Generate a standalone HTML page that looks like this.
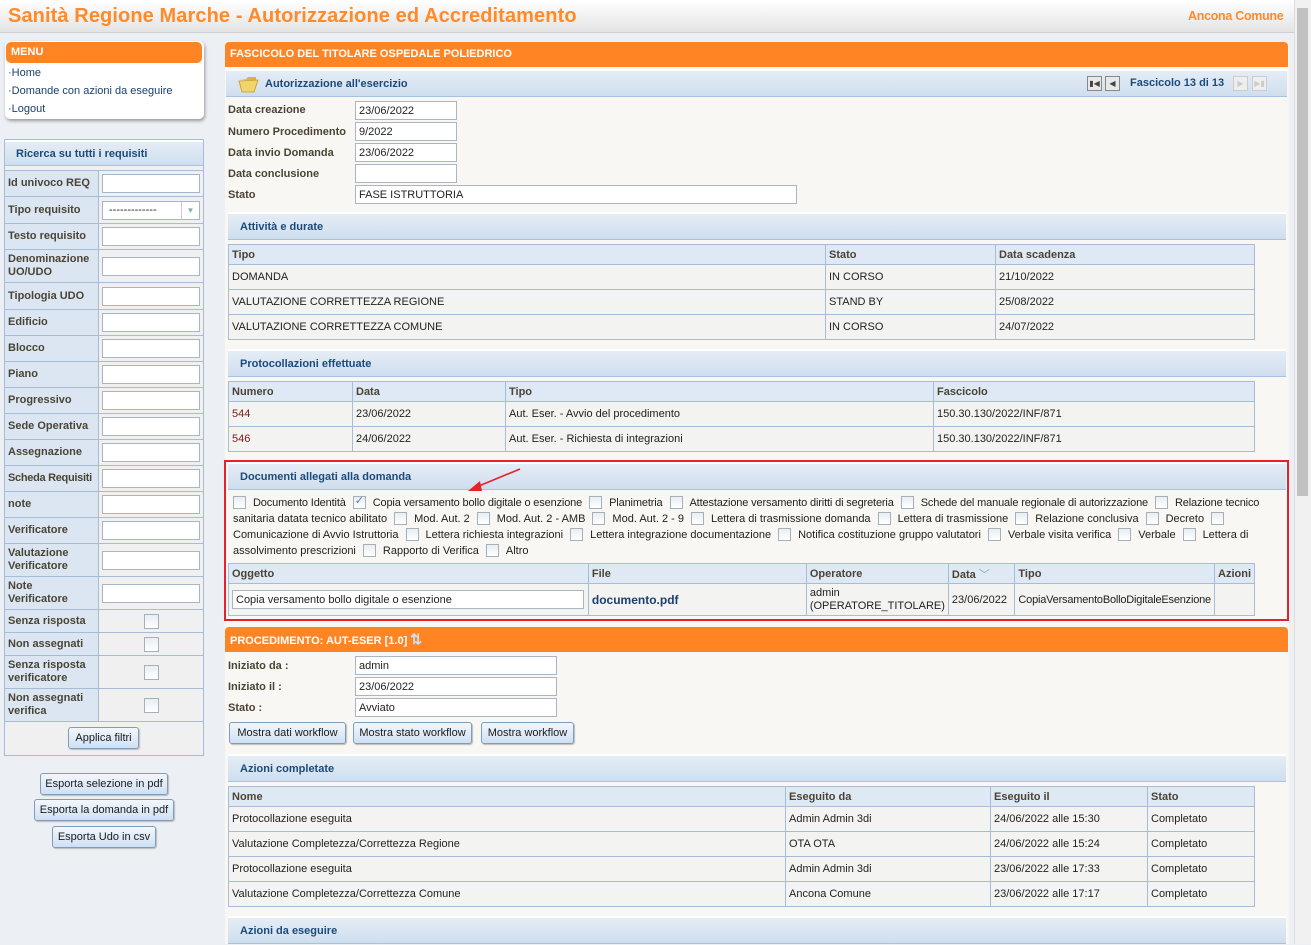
<!DOCTYPE html>
<html><head><meta charset="utf-8"><style>
*{box-sizing:border-box;margin:0;padding:0}
body{width:1311px;height:944px;overflow:hidden;background:#eceff4;font-family:"Liberation Sans",Arial,sans-serif;font-size:11px;color:#222;position:relative}
.a{position:absolute}
.hdr{left:0;top:0;width:1294px;height:33px;background:linear-gradient(#fff,#e4e4e4);border-bottom:1px solid #d0d0d0}
.title{left:8px;top:5px;font-size:20px;font-weight:bold;color:#ff8a2a;white-space:nowrap;letter-spacing:0.1px}
.sb{left:1294px;top:0;width:17px;height:944px;background:#f1f1f1;border-left:1px solid #ddd}
.thumb{left:1297px;top:8px;width:11px;height:488px;background:#c1c1c1}
.orange{background:#ff8424;color:#fff;font-weight:bold;border-radius:4px 4px 0 0;padding-left:5px;line-height:24px}
.sec{background:linear-gradient(#e5edf6,#cfdeee);border-top:2px solid #fff;border-bottom:1px solid #a9c3de;color:#1b4b7b;font-weight:bold;padding-left:12px}
.lbl{font-weight:bold;color:#4a4434;white-space:nowrap}
.inp{background:#fff;border:1px solid #a9b6c2;padding-left:3px;line-height:18px;white-space:nowrap;overflow:hidden}
table{border-collapse:collapse;position:absolute}
td,th{border:1px solid #a7bdd6;padding:0 3px;text-align:left;white-space:nowrap}
th{background:#dfe8f5;color:#4a4434;font-weight:bold;height:20px}
td{background:#f3f3f1;height:25px}
.btn{position:absolute;background:linear-gradient(#f2f7fd,#cfe0f3);border:1px solid #7f9db9;border-radius:3px;text-align:center;line-height:20px;color:#1a1a1a;box-shadow:1px 1px 1px #bbb}
.ft td{background:#f0f0f0;height:auto}
.ft td.l{background:#dce6f3;font-weight:bold;color:#4a4434;width:96px;padding:0 3px;white-space:normal;line-height:13px}
.fi{display:block;width:98px;height:19px;background:#fff;border:1px solid #a9b6c2;margin:0 auto}
.cb{display:inline-block;width:13px;height:13px;border:1px solid #a5b0bb;background:linear-gradient(#e9edf1,#fff);vertical-align:-3px;margin:0 7px}
.cl{position:absolute;left:233px;white-space:nowrap;color:#222}
.cbx{width:13px;height:13px;border:1px solid #a5b0bb;background:linear-gradient(#e9edf1,#fff)}
</style></head><body>
<div class="a hdr"></div>
<div class="a title">Sanità Regione Marche - Autorizzazione ed Accreditamento</div>
<div class="a" style="left:1188px;top:9px;color:#ff8a2a;font-size:12.5px;font-weight:bold;letter-spacing:-0.3px">Ancona Comune</div>
<div class="a sb"></div><div class="a thumb"></div>

<!-- menu -->
<div class="a" style="left:5px;top:41px;width:199px;height:78px;background:#fff;border-radius:5px;box-shadow:1px 2px 3px #999"></div>
<div class="a orange" style="left:6px;top:42px;width:196px;height:21px;line-height:20px;border-radius:5px;font-size:11px">MENU</div>
<div class="a" style="left:8px;top:64px;line-height:18px;color:#1b3f6e">·Home<br>·Domande con azioni da eseguire<br>·Logout</div>

<!-- filter -->
<div class="a" style="left:4px;top:139px;width:200px;height:616px;border:1px solid #a7bdd6;background:#f0f0f0"></div>
<div class="a sec" style="left:5px;top:140px;width:198px;height:26px;line-height:25px;padding-left:11px">Ricerca su tutti i requisiti</div>
<table class="ft" style="left:4px;top:170px;width:200px">
<tr style="height:26px"><td class="l">Id univoco REQ</td><td><span class="fi"></span></td></tr>
<tr style="height:27px"><td class="l">Tipo requisito</td><td><span class="fi" style="font-weight:normal;line-height:17px;padding-left:6px;position:relative">-------------<span style="position:absolute;right:0;top:0;width:18px;height:17px;border-left:1px solid #ccc;color:#8aa;font-size:8px;text-align:center">▼</span></span></td></tr>
<tr style="height:26px"><td class="l">Testo requisito</td><td><span class="fi"></span></td></tr>
<tr style="height:33px"><td class="l">Denominazione UO/UDO</td><td><span class="fi"></span></td></tr>
<tr style="height:27px"><td class="l">Tipologia UDO</td><td><span class="fi"></span></td></tr>
<tr style="height:26px"><td class="l">Edificio</td><td><span class="fi"></span></td></tr>
<tr style="height:26px"><td class="l">Blocco</td><td><span class="fi"></span></td></tr>
<tr style="height:26px"><td class="l">Piano</td><td><span class="fi"></span></td></tr>
<tr style="height:26px"><td class="l">Progressivo</td><td><span class="fi"></span></td></tr>
<tr style="height:26px"><td class="l">Sede Operativa</td><td><span class="fi"></span></td></tr>
<tr style="height:26px"><td class="l">Assegnazione</td><td><span class="fi"></span></td></tr>
<tr style="height:26px"><td class="l" style="white-space:nowrap;letter-spacing:-0.3px">Scheda Requisiti</td><td><span class="fi"></span></td></tr>
<tr style="height:26px"><td class="l">note</td><td><span class="fi"></span></td></tr>
<tr style="height:26px"><td class="l">Verificatore</td><td><span class="fi"></span></td></tr>
<tr style="height:33px"><td class="l">Valutazione Verificatore</td><td><span class="fi"></span></td></tr>
<tr style="height:33px"><td class="l">Note Verificatore</td><td><span class="fi"></span></td></tr>
<tr style="height:23px"><td class="l">Senza risposta</td><td><div class="cbx" style="margin:0 auto;width:15px;height:15px"></div></td></tr>
<tr style="height:23px"><td class="l">Non assegnati</td><td><div class="cbx" style="margin:0 auto;width:15px;height:15px"></div></td></tr>
<tr style="height:33px"><td class="l">Senza risposta verificatore</td><td><div class="cbx" style="margin:0 auto;width:15px;height:15px"></div></td></tr>
<tr style="height:33px"><td class="l">Non assegnati verifica</td><td><div class="cbx" style="margin:0 auto;width:15px;height:15px"></div></td></tr>
<tr style="height:34px"><td colspan="2"></td></tr>
</table>
<div class="btn" style="left:68px;top:727px;width:71px">Applica filtri</div>
<div class="btn" style="left:40px;top:773px;width:128px">Esporta selezione in pdf</div>
<div class="btn" style="left:34px;top:799px;width:140px">Esporta la domanda in pdf</div>
<div class="btn" style="left:52px;top:826px;width:104px">Esporta Udo in csv</div>

<!-- main -->
<div class="a" style="left:225px;top:42px;width:1064px;height:902px;background:#f8f7f3"></div>
<div class="a orange" style="left:225px;top:42px;width:1063px;height:25px;line-height:25px;font-size:11px">FASCICOLO DEL TITOLARE OSPEDALE POLIEDRICO</div>
<div class="a sec" style="left:226px;top:69px;width:1061px;height:28px;line-height:27px;padding-left:39px">Autorizzazione all'esercizio</div>
<svg class="a" style="left:238px;top:75px" width="22" height="18" viewBox="0 0 22 18"><path d="M2 4 L8 4 L10 2 L18 2 L18 6 Z" fill="#d9b44a"/><path d="M1 6 L20 5 L16 17 L4 17 Z" fill="#f3d36b" stroke="#c49a2c" stroke-width=".8"/></svg>
<div class="a" style="left:1087px;top:76px;width:15px;height:15px;border:1px solid #888;background:#e8e8e8;font-size:8px;text-align:center;line-height:13px;color:#444">▮◀</div>
<div class="a" style="left:1105px;top:76px;width:15px;height:15px;border:1px solid #888;background:#e8e8e8;font-size:8px;text-align:center;line-height:13px;color:#444">◀</div>
<div class="a" style="left:1130px;top:77px;font-weight:bold;color:#1b4b7b">Fascicolo 13 di 13</div>
<div class="a" style="left:1233px;top:76px;width:15px;height:15px;border:1px solid #ccc;background:#eee;font-size:8px;text-align:center;line-height:13px;color:#ccc">▶</div>
<div class="a" style="left:1252px;top:76px;width:15px;height:15px;border:1px solid #ccc;background:#eee;font-size:8px;text-align:center;line-height:13px;color:#ccc">▶▮</div>

<div class="a lbl" style="left:228px;top:104px">Data creazione</div><div class="a inp" style="left:355px;top:101px;width:102px;height:19px">23/06/2022</div>
<div class="a lbl" style="left:228px;top:126px">Numero Procedimento</div><div class="a inp" style="left:355px;top:122px;width:102px;height:19px">9/2022</div>
<div class="a lbl" style="left:228px;top:147px">Data invio Domanda</div><div class="a inp" style="left:355px;top:143px;width:102px;height:19px">23/06/2022</div>
<div class="a lbl" style="left:228px;top:168px">Data conclusione</div><div class="a inp" style="left:355px;top:164px;width:102px;height:19px"></div>
<div class="a lbl" style="left:228px;top:189px">Stato</div><div class="a inp" style="left:355px;top:185px;width:442px;height:19px">FASE ISTRUTTORIA</div>

<div class="a sec" style="left:228px;top:212px;width:1058px;height:28px;line-height:27px">Attività e durate</div>
<table style="left:228px;top:244px;width:1027px">
<tr><th style="width:597px">Tipo</th><th style="width:170px">Stato</th><th>Data scadenza</th></tr>
<tr><td>DOMANDA</td><td>IN CORSO</td><td>21/10/2022</td></tr>
<tr><td>VALUTAZIONE CORRETTEZZA REGIONE</td><td>STAND BY</td><td>25/08/2022</td></tr>
<tr><td>VALUTAZIONE CORRETTEZZA COMUNE</td><td>IN CORSO</td><td>24/07/2022</td></tr>
</table>

<div class="a sec" style="left:228px;top:349px;width:1058px;height:28px;line-height:27px">Protocollazioni effettuate</div>
<table style="left:228px;top:381px;width:1027px">
<tr><th style="width:124px">Numero</th><th style="width:153px">Data</th><th style="width:428px">Tipo</th><th>Fascicolo</th></tr>
<tr><td style="color:#7a1a1a">544</td><td>23/06/2022</td><td>Aut. Eser. - Avvio del procedimento</td><td>150.30.130/2022/INF/871</td></tr>
<tr><td style="color:#7a1a1a">546</td><td>24/06/2022</td><td>Aut. Eser. - Richiesta di integrazioni</td><td>150.30.130/2022/INF/871</td></tr>
</table>

<!-- documenti -->
<div class="a" style="left:224px;top:460px;width:1065px;height:161px;border:2px solid #e8202a"></div>
<div class="a sec" style="left:228px;top:462px;width:1058px;height:28px;line-height:27px">Documenti allegati alla domanda</div>
<svg class="a" style="left:460px;top:464px" width="66" height="32"><line x1="60" y1="5" x2="14" y2="24" stroke="#e8202a" stroke-width="1.6"/><path d="M8 27 L20 17 L22 27 Z" fill="#e8202a"/></svg>
<div class="cl" style="left:226px;top:496px;letter-spacing:-0.15px"><span class="cb"></span>Documento Identità<span class="cb" style="position:relative"><span style="position:absolute;left:1px;top:-3px;color:#4f7fae;font-size:11px">✓</span></span>Copia versamento bollo digitale o esenzione<span class="cb"></span>Planimetria<span class="cb"></span>Attestazione versamento diritti di segreteria<span class="cb"></span>Schede del manuale regionale di autorizzazione<span class="cb"></span>Relazione tecnico</div>
<div class="cl" style="top:512px">sanitaria datata tecnico abilitato<span class="cb"></span>Mod. Aut. 2<span class="cb"></span>Mod. Aut. 2 - AMB<span class="cb"></span>Mod. Aut. 2 - 9<span class="cb"></span>Lettera di trasmissione domanda<span class="cb"></span>Lettera di trasmissione<span class="cb"></span>Relazione conclusiva<span class="cb"></span>Decreto<span class="cb"></span></div>
<div class="cl" style="top:528px">Comunicazione di Avvio Istruttoria<span class="cb"></span>Lettera richiesta integrazioni<span class="cb"></span>Lettera integrazione documentazione<span class="cb"></span>Notifica costituzione gruppo valutatori<span class="cb"></span>Verbale visita verifica<span class="cb"></span>Verbale<span class="cb"></span>Lettera di</div>
<div class="cl" style="top:544px">assolvimento prescrizioni<span class="cb"></span>Rapporto di Verifica<span class="cb"></span>Altro</div>
<table style="left:228px;top:563px;width:1027px">
<tr><th style="width:360px">Oggetto</th><th style="width:232px">File</th><th style="width:127px">Operatore</th><th style="width:67px">Data <span style="color:#8aa;font-weight:normal">﹀</span></th><th style="width:193px">Tipo</th><th>Azioni</th></tr>
<tr><td style="height:32px"><div class="inp" style="width:352px;height:19px">Copia versamento bollo digitale o esenzione</div></td><td style="font-weight:bold;color:#1b3f6e;font-size:12px">documento.pdf</td><td style="line-height:13px">admin<br>(OPERATORE_TITOLARE)</td><td>23/06/2022</td><td style="letter-spacing:-0.2px">CopiaVersamentoBolloDigitaleEsenzione</td><td></td></tr>
</table>

<!-- procedimento -->
<div class="a orange" style="left:225px;top:627px;width:1063px;height:25px;line-height:25px;font-size:11px">PROCEDIMENTO: AUT-ESER [1.0] <span style="color:#cfe0f3;font-size:14px">⇅</span></div>
<div class="a lbl" style="left:228px;top:660px">Iniziato da :</div><div class="a inp" style="left:355px;top:656px;width:202px;height:19px">admin</div>
<div class="a lbl" style="left:228px;top:681px">Iniziato il :</div><div class="a inp" style="left:355px;top:677px;width:202px;height:19px">23/06/2022</div>
<div class="a lbl" style="left:228px;top:702px">Stato :</div><div class="a inp" style="left:355px;top:698px;width:202px;height:19px">Avviato</div>
<div class="btn" style="left:229px;top:722px;width:117px">Mostra dati workflow</div>
<div class="btn" style="left:353px;top:722px;width:119px">Mostra stato workflow</div>
<div class="btn" style="left:481px;top:722px;width:93px">Mostra workflow</div>

<div class="a sec" style="left:228px;top:754px;width:1058px;height:28px;line-height:27px">Azioni completate</div>
<table style="left:228px;top:786px;width:1027px">
<tr><th style="width:557px">Nome</th><th style="width:205px">Eseguito da</th><th style="width:157px">Eseguito il</th><th>Stato</th></tr>
<tr><td>Protocollazione eseguita</td><td>Admin Admin 3di</td><td>24/06/2022 alle 15:30</td><td>Completato</td></tr>
<tr><td>Valutazione Completezza/Correttezza Regione</td><td>OTA OTA</td><td>24/06/2022 alle 15:24</td><td>Completato</td></tr>
<tr><td>Protocollazione eseguita</td><td>Admin Admin 3di</td><td>23/06/2022 alle 17:33</td><td>Completato</td></tr>
<tr><td>Valutazione Completezza/Correttezza Comune</td><td>Ancona Comune</td><td>23/06/2022 alle 17:17</td><td>Completato</td></tr>
</table>
<div class="a sec" style="left:228px;top:916px;width:1058px;height:28px;line-height:27px">Azioni da eseguire</div>
</body></html>
